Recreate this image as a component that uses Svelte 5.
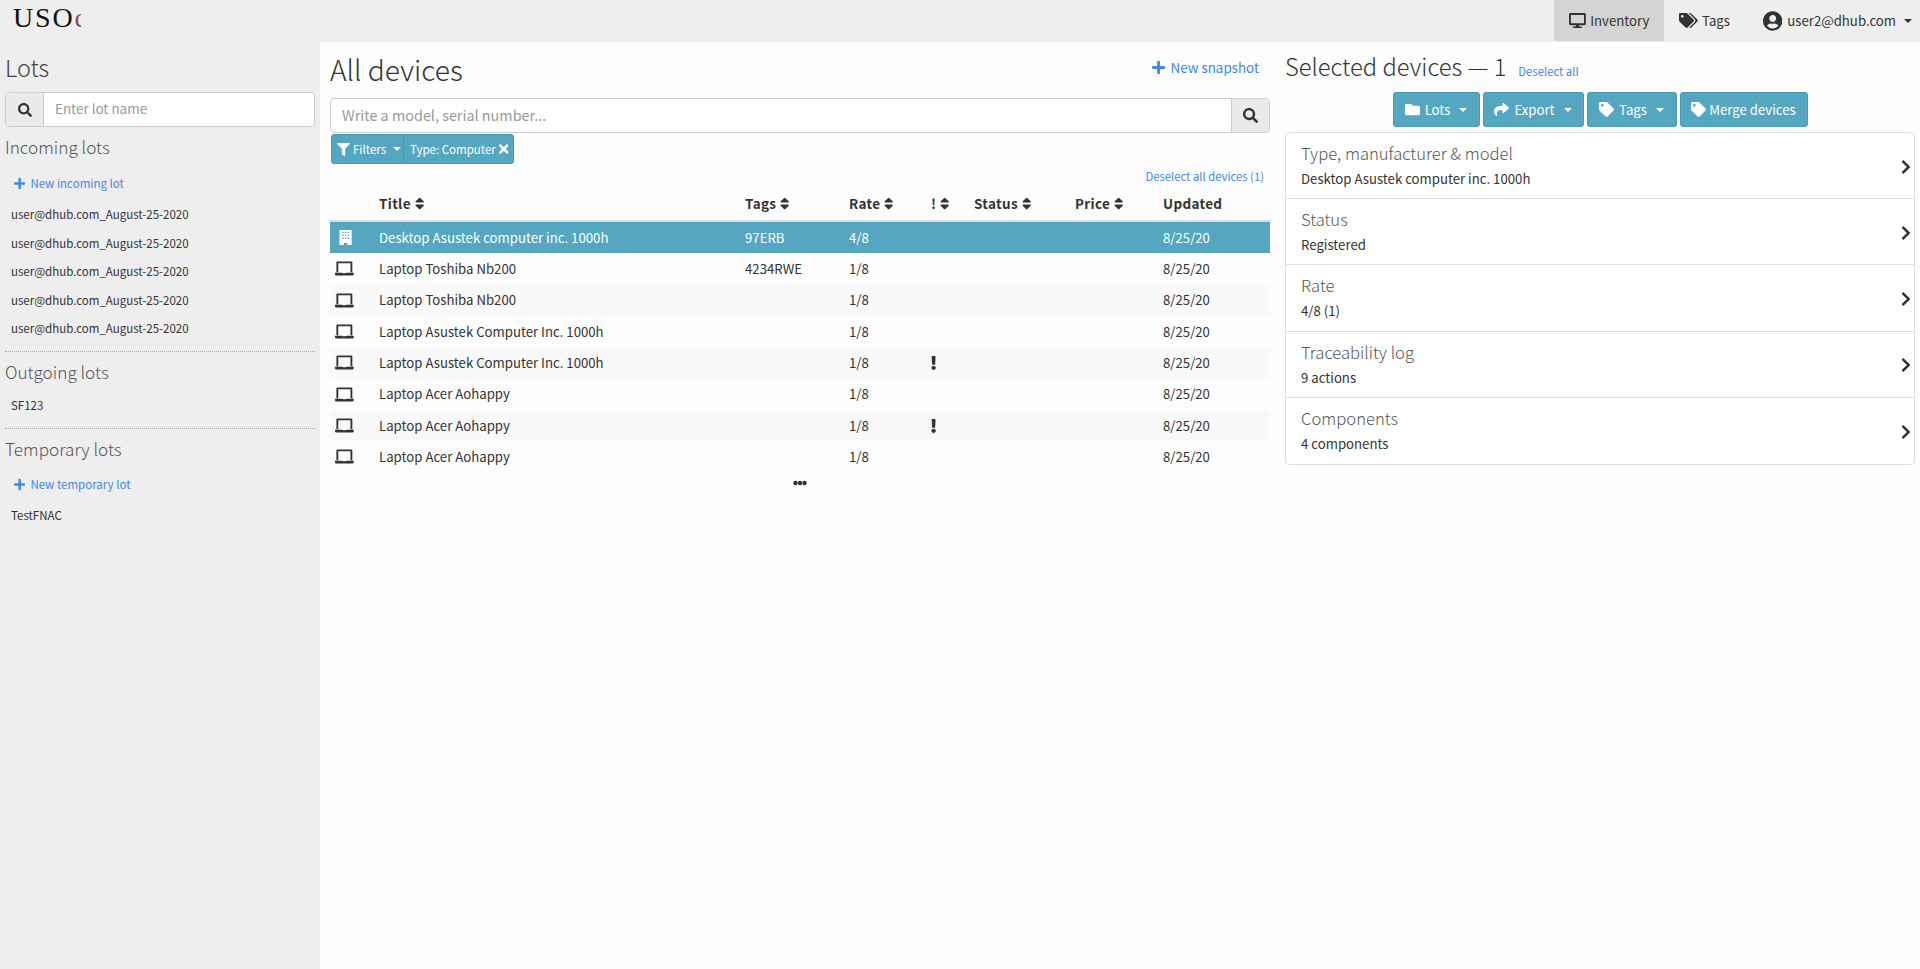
<script>
  const P = {
    search: [512, 'M505 442.7L405.3 343c-4.5-4.5-10.6-7-17-7H372c27.6-35.3 44-79.7 44-128C416 93.1 322.9 0 208 0S0 93.1 0 208s93.1 208 208 208c48.3 0 92.7-16.4 128-44v16.3c0 6.4 2.5 12.5 7 17l99.7 99.7c9.4 9.4 24.6 9.4 33.9 0l28.3-28.3c9.4-9.4 9.4-24.6.1-34zM208 336c-70.7 0-128-57.2-128-128 0-70.7 57.2-128 128-128 70.7 0 128 57.2 128 128 0 70.7-57.2 128-128 128z'],
    plus: [448, 'M416 208H272V64c0-17.67-14.33-32-32-32h-32c-17.67 0-32 14.33-32 32v144H32c-17.67 0-32 14.33-32 32v32c0 17.67 14.33 32 32 32h144v144c0 17.67 14.33 32 32 32h32c17.67 0 32-14.33 32-32V304h144c17.67 0 32-14.33 32-32v-32c0-17.67-14.33-32-32-32z'],
    tags: [640, 'M497.941 225.941L286.059 14.059A48 48 0 0 0 252.118 0H48C21.49 0 0 21.49 0 48v204.118a48 48 0 0 0 14.059 33.941l211.882 211.882c18.744 18.745 49.136 18.746 67.882 0l204.118-204.118c18.745-18.745 18.745-49.137 0-67.882zM112 160c-26.51 0-48-21.49-48-48s21.49-48 48-48 48 21.49 48 48-21.49 48-48 48zm513.941 133.823L421.823 497.941c-18.745 18.745-49.137 18.745-67.882 0l-.36-.36L527.64 323.522c16.999-16.999 26.36-39.6 26.36-63.64s-9.362-46.641-26.36-63.64L331.397 0h48.721a48 48 0 0 1 33.941 14.059l211.882 211.882c18.745 18.745 18.745 49.137 0 67.882z'],
    tag: [512, 'M0 252.118V48C0 21.49 21.49 0 48 0h204.118a48 48 0 0 1 33.941 14.059l211.882 211.882c18.745 18.745 18.745 49.137 0 67.882L293.823 497.941c-18.745 18.745-49.137 18.745-67.882 0L14.059 286.059A48 48 0 0 1 0 252.118zM112 64c-26.51 0-48 21.49-48 48s21.49 48 48 48 48-21.49 48-48-21.49-48-48-48z'],
    user: [496, 'M248 8C111 8 0 119 0 256s111 248 248 248 248-111 248-248S385 8 248 8zm0 96c48.6 0 88 39.4 88 88s-39.4 88-88 88-88-39.4-88-88 39.4-88 88-88zm0 344c-58.7 0-111.3-26.6-146.5-68.2 18.8-35.4 55.6-59.8 98.5-59.8 2.4 0 4.8.4 7.1 1.1 13 4.2 26.6 6.9 40.9 6.9 14.3 0 28-2.7 40.9-6.9 2.3-.7 4.7-1.1 7.1-1.1 42.9 0 79.7 24.4 98.5 59.8C359.3 421.4 306.7 448 248 448z'],
    desktop: [576, 'M528 0H48C21.5 0 0 21.5 0 48v320c0 26.5 21.5 48 48 48h192l-16 48h-72c-13.3 0-24 10.7-24 24s10.7 24 24 24h272c13.3 0 24-10.7 24-24s-10.7-24-24-24h-72l-16-48h192c26.5 0 48-21.5 48-48V48c0-26.5-21.5-48-48-48zm-16 352H64V64h448v288z'],
    filter: [512, 'M487.976 0H24.028C2.71 0-8.047 25.866 7.058 40.971L192 225.941V432c0 7.831 3.821 15.17 10.237 19.662l80 55.98C298.02 518.69 320 507.493 320 487.98V225.941l184.947-184.97C520.021 25.896 509.338 0 487.976 0z'],
    folder: [512, 'M464 128H272l-64-64H48C21.49 64 0 85.49 0 112v288c0 26.51 21.49 48 48 48h416c26.51 0 48-21.49 48-48V176c0-26.51-21.49-48-48-48z'],
    share: [512, 'M503.691 189.836L327.687 37.851C312.281 24.546 288 35.347 288 56.015v80.053C127.371 137.907 0 170.1 0 322.326c0 61.441 39.581 122.309 83.333 154.132 13.653 9.931 33.111-2.533 28.077-18.631C66.066 312.814 132.917 274.316 288 272.085V360c0 20.7 24.3 31.453 39.687 18.164l176.004-152c11.071-9.562 11.086-26.753 0-36.328z'],
    times: [352, 'M242.72 256l100.07-100.07c12.28-12.28 12.28-32.19 0-44.48l-22.24-22.24c-12.28-12.28-32.19-12.28-44.48 0L176 189.28 75.93 89.21c-12.28-12.28-32.19-12.28-44.48 0L9.21 111.45c-12.28 12.28-12.28 32.19 0 44.48L109.28 256 9.21 356.07c-12.28 12.28-12.28 32.19 0 44.48l22.24 22.24c12.28 12.28 32.2 12.28 44.48 0L176 322.72l100.07 100.07c12.28 12.28 32.2 12.28 44.48 0l22.24-22.24c12.28-12.28 12.28-32.19 0-44.48L242.72 256z'],
    sort: [320, 'M41 288h238c21.4 0 32.1 25.9 17 41L177 448c-9.4 9.4-24.6 9.4-33.9 0L24 329c-15.1-15.1-4.4-41 17-41zm255-105L177 64c-9.4-9.4-24.6-9.4-33.9 0L24 183c-15.1 15.1-4.4 41 17 41h238c21.4 0 32.1-25.9 17-41z'],
    chevron: [320, 'M285.476 272.971L91.132 467.314c-9.373 9.373-24.569 9.373-33.941 0l-22.667-22.667c-9.357-9.357-9.375-24.522-.04-33.901L188.505 256 34.484 101.255c-9.335-9.379-9.317-24.544.04-33.901l22.667-22.667c9.373-9.373 24.569-9.373 33.941 0L285.475 239.03c9.373 9.372 9.373 24.568.001 33.941z'],
    bang: [192, 'M176 432c0 44.112-35.888 80-80 80s-80-35.888-80-80 35.888-80 80-80 80 35.888 80 80zM25.26 25.199l13.6 272C39.499 309.972 50.041 320 62.83 320h66.34c12.789 0 23.331-10.028 23.97-22.801l13.6-272C167.425 11.49 156.496 0 142.77 0H49.23C35.504 0 24.575 11.49 25.26 25.199z'],
    laptop: [640, 'M80 16h480a32 32 0 0 1 32 32v336h-64V80H112v304H48V48a32 32 0 0 1 32-32zM0 400h250l16 20h108l16-20h250v48a48 48 0 0 1-48 48H48a48 48 0 0 1-48-48z'],
    building: [448, 'M16 0h416v512H288v-72H160v72H16V0zm92 64v48h48V64h-48zm92 0v48h48V64h-48zm92 0v48h48V64h-48zm-184 96v48h48v-48h-48zm92 0v48h48v-48h-48zm92 0v48h48v-48h-48zm-184 96v48h48v-48h-48zm92 0v48h48v-48h-48zm92 0v48h48v-48h-48z'],
    dots: [512, 'M170 256a80 80 0 1 1-160 0 80 80 0 0 1 160 0zm86-80a80 80 0 1 0 0 160 80 80 0 0 0 0-160zm166 0a80 80 0 1 0 0 160 80 80 0 0 0 0-160z']
  };
  const incoming = Array(5).fill('user@dhub.com_August-25-2020');
  const columns = [
    { name: 'Title', cls: 'title', sort: true },
    { name: 'Tags', cls: 'tags', sort: true },
    { name: 'Rate', cls: 'rate', sort: true },
    { name: '!', cls: 'bang', sort: true },
    { name: 'Status', cls: 'status', sort: true },
    { name: 'Price', cls: 'price', sort: true },
    { name: 'Updated', cls: 'updated', sort: false }
  ];
  const rows = [
    { t: 'Desktop Asustek computer inc. 1000h', tag: '97ERB', r: '4/8', sel: true },
    { t: 'Laptop Toshiba Nb200', tag: '4234RWE', r: '1/8' },
    { t: 'Laptop Toshiba Nb200', tag: '', r: '1/8' },
    { t: 'Laptop Asustek Computer Inc. 1000h', tag: '', r: '1/8' },
    { t: 'Laptop Asustek Computer Inc. 1000h', tag: '', r: '1/8', warn: true },
    { t: 'Laptop Acer Aohappy', tag: '', r: '1/8' },
    { t: 'Laptop Acer Aohappy', tag: '', r: '1/8', warn: true },
    { t: 'Laptop Acer Aohappy', tag: '', r: '1/8' }
  ];
  const details = [
    ['Type, manufacturer & model', 'Desktop Asustek computer inc. 1000h'],
    ['Status', 'Registered'],
    ['Rate', '4/8 (1)'],
    ['Traceability log', '9 actions'],
    ['Components', '4 components']
  ];
</script>

{#snippet icon(name, h, cls = '')}
  <svg class="ic {cls}" height={h} width={(h * P[name][0]) / 512} viewBox="0 0 {P[name][0]} 512" aria-hidden="true"><path d={P[name][1]} /></svg>
{/snippet}

<div class="page">
  <header class="nav">
    <div class="logo"><span class="logo-text">USO<span class="logo-c">c</span></span></div>
    <nav class="menu">
      <a class="item active">{@render icon('desktop', 15)}<span>Inventory</span></a>
      <a class="item tagsitem">{@render icon('tags', 15)}<span>Tags</span></a>
      <a class="item useritem">{@render icon('user', 20)}<span>user2@dhub.com</span><i class="caret"></i></a>
    </nav>
  </header>

  <div class="body">
    <aside class="side">
      <h2 class="lots-h">Lots</h2>
      <div class="igroup side-search">
        <span class="addon start">{@render icon('search', 14)}</span>
        <input placeholder="Enter lot name" />
      </div>
      <h3 class="first">Incoming lots</h3>
      <a class="new">{@render icon('plus', 13)}<span>New incoming lot</span></a>
      <ul>
        {#each incoming as l}<li>{l}</li>{/each}
      </ul>
      <hr />
      <h3>Outgoing lots</h3>
      <ul class="single"><li>SF123</li></ul>
      <hr />
      <h3>Temporary lots</h3>
      <a class="new tmp">{@render icon('plus', 13)}<span>New temporary lot</span></a>
      <ul class="single"><li>TestFNAC</li></ul>
    </aside>

    <main class="center">
      <div class="center-head">
        <h1>All devices</h1>
        <a class="snapshot">{@render icon('plus', 15)}<span>New snapshot</span></a>
      </div>
      <div class="igroup main-search">
        <input placeholder="Write a model, serial number..." />
        <span class="addon end">{@render icon('search', 15)}</span>
      </div>
      <div class="filters">
        <span class="fbtn">{@render icon('filter', 13)}<span>Filters</span><i class="caret"></i></span>
        <span class="fbtn second"><span>Type: Computer</span>{@render icon('times', 14)}</span>
      </div>
      <div class="deselect"><a>Deselect all devices (1)</a></div>

      <div class="table">
        <div class="row head">
          <span class="cell icon"></span>
          {#each columns as c}
            <span class="cell {c.cls}">{c.name}{#if c.sort}{@render icon('sort', 15, 'sort')}{/if}</span>
          {/each}
        </div>
        {#each rows as r, i}
          <div class="row" class:sel={r.sel} class:alt={i % 2 === 0 && !r.sel}>
            <span class="cell icon">{@render icon(r.sel ? 'building' : 'laptop', 15)}</span>
            <span class="cell title">{r.t}</span>
            <span class="cell tags">{r.tag}</span>
            <span class="cell rate">{r.r}</span>
            <span class="cell bang">{#if r.warn}{@render icon('bang', 14)}{/if}</span>
            <span class="cell status"></span>
            <span class="cell price"></span>
            <span class="cell updated">8/25/20</span>
          </div>
        {/each}
      </div>
      <div class="more">{@render icon('dots', 14)}</div>
    </main>

    <section class="detail-col">
      <div class="detail-head">
        <h2>Selected devices — 1</h2>
        <a>Deselect all</a>
      </div>
      <div class="actions">
        <span class="btn w1">{@render icon('folder', 15)}<span>Lots</span><i class="caret"></i></span>
        <span class="btn w2">{@render icon('share', 15)}<span>Export</span><i class="caret"></i></span>
        <span class="btn w3">{@render icon('tag', 15)}<span>Tags</span><i class="caret"></i></span>
        <span class="btn w4">{@render icon('tag', 15)}<span>Merge devices</span></span>
      </div>
      <div class="panel">
        {#each details as d}
          <div class="detail">
            <div>
              <div class="dt">{d[0]}</div>
              <div class="dd">{d[1]}</div>
            </div>
            {@render icon('chevron', 16, 'chev')}
          </div>
        {/each}
      </div>
    </section>
  </div>
</div>

<style>
  :global(body) {
    margin: 0;
    background: #fdfdfd;
  }
  .page {
    font-family: "Noto Sans CJK SC", "Noto Sans", sans-serif;
    font-size: 13.2px;
    line-height: 20px;
    color: #333;
    min-height: 969px;
    display: flex;
    flex-direction: column;
  }
  .ic {
    fill: currentColor;
    flex: none;
    display: inline-block;
  }
  a { color: #3f88e6; }

  .nav {
    height: 42px;
    background: #eee;
    display: flex;
    justify-content: space-between;
  }
  .logo {
    width: 81px;
    overflow: hidden;
    padding-left: 13px;
    box-sizing: border-box;
    height: 42px;
  }
  .logo-text {
    font-family: "Liberation Serif", serif;
    font-size: 28px;
    line-height: 36px;
    letter-spacing: 1.8px;
    color: #111;
    white-space: nowrap;
    display: block;
  }
  .logo-c { color: #a23a6c; }
  .menu {
    display: flex;
    padding-right: 8px;
  }
  .item {
    display: flex;
    align-items: center;
    gap: 4px;
    color: #333;
    height: 41px;
  }
  .active {
    background: #d4d4d4;
    width: 110px;
    box-sizing: border-box;
    padding-left: 15px;
  }
  .tagsitem { margin-left: 15px; gap: 4px; }
  .useritem { margin-left: 33px; gap: 5px; }
  .useritem .caret { margin-left: 3px; }
  .caret {
    display: inline-block;
    width: 0;
    height: 0;
    border-top: 4px solid currentColor;
    border-left: 4px solid transparent;
    border-right: 4px solid transparent;
  }

  .body {
    flex: 1;
    display: flex;
  }
  .side {
    width: 320px;
    background: #eee;
    padding: 0 5px;
    box-sizing: border-box;
    min-height: 927px;
    flex: none;
  }
  h1, h2, h3 {
    font-family: "Noto Sans CJK SC Light", "Noto Sans CJK SC", sans-serif;
    font-weight: 300;
    margin: 0;
    color: #333;
  }
  .lots-h {
    font-size: 23.5px;
    line-height: 34px;
    margin-top: 8px;
    color: #444;
  }
  .igroup {
    display: flex;
    height: 35px;
    box-sizing: border-box;
    border: 1px solid #ccc;
    border-radius: 4px;
    background: #fff;
    overflow: hidden;
  }
  .side-search { margin-top: 8px; }
  .addon {
    background: #eaeaea;
    width: 38px;
    flex: none;
    display: flex;
    align-items: center;
    justify-content: center;
    box-sizing: border-box;
  }
  .addon.start { border-right: 1px solid #ccc; }
  .addon.end { border-left: 1px solid #ccc; }
  input {
    flex: 1;
    min-width: 0;
    border: 0;
    outline: 0;
    background: transparent;
    font: inherit;
    padding: 0 11px 2px;
    color: #333;
  }
  .side-search input { font-size: 13.45px; padding-bottom: 4px; }
  .main-search input { font-size: 14.4px; }
  input::placeholder { color: #999; opacity: 1; }
  h3 {
    font-size: 17.2px;
    line-height: 26px;
    color: #555;
  }
  h3.first { margin-top: 7px; }
  .new {
    display: flex;
    align-items: center;
    gap: 5px;
    font-size: 11.5px;
    padding-left: 9px;
    margin-top: 13px;
    height: 20px;
  }
  .new.tmp { margin-top: 12px; }
  ul {
    list-style: none;
    margin: 7px 0 0;
    padding: 0 0 0 6px;
    font-size: 11.5px;
  }
  li { height: 28.5px; line-height: 28.5px; white-space: nowrap; }
  ul.single { margin-top: 6.6px; height: 29px; }
  hr {
    border: 0;
    border-top: 1px dotted #aaa;
    margin: 8px 0 7px;
  }

  .center {
    width: 940px;
    margin-left: 10px;
    flex: none;
  }
  .center-head {
    display: flex;
    justify-content: space-between;
    align-items: center;
    height: 56px;
  }
  h1 { font-size: 28.2px; line-height: 40px; margin-top: -3px; }
  .snapshot {
    display: flex;
    align-items: center;
    gap: 5px;
    margin-right: 11px;
    margin-top: -6px;
    font-size: 13.4px;
  }
  .filters {
    display: flex;
    margin: 1px 0 0 1px;
    height: 30px;
    font-size: 11.5px;
  }
  .fbtn {
    background: #55a6c0;
    border: 1px solid #4a97b0;
    color: #fff;
    display: inline-flex;
    align-items: center;
    gap: 3px;
    padding: 0 5px;
    box-sizing: border-box;
    border-radius: 3px 0 0 3px;
    width: 73px;
    white-space: nowrap;
  }
  .fbtn .caret { margin-left: 4px; }
  .fbtn.second {
    border-left: 1px solid #4a97b0;
    border-radius: 0 3px 3px 0;
    width: 111px;
    margin-left: -1px;
    padding-left: 6px;
  }
  .deselect {
    text-align: right;
    font-size: 11.3px;
    padding-right: 6px;
    margin-top: 2px;
    height: 20px;
  }
  .table { width: 940px; }
  .row {
    display: flex;
    height: 31.33px;
    align-items: center;
    white-space: nowrap;
  }
  .row.head {
    height: 36px;
    font-size: 13.5px;
    font-weight: 700;
    border-bottom: 2px solid #ddd;
    box-sizing: border-box;
    letter-spacing: .3px;
  }
  .alt { background: #f9f9f9; }
  .sel { background: #55a6c0; color: #fff; }
  .sel .cell.icon { padding-left: 9px; }
  .cell { display: block; flex: none; }
  .cell.icon { width: 49px; padding-left: 5px; box-sizing: border-box; display: flex; }
  .cell.title { width: 366px; }
  .cell.tags { width: 104px; }
  .cell.rate { width: 82px; }
  .cell.bang { width: 43px; }
  .cell.status { width: 101px; }
  .cell.price { width: 88px; }
  .head .cell { display: flex; align-items: center; gap: 4px; }
  .row:not(.head) .cell.bang { display: flex; }
  .more {
    display: flex;
    justify-content: center;
    margin-top: 3px;
    width: 940px;
  }

  .detail-col {
    width: 630px;
    margin-left: 15px;
    flex: none;
  }
  .detail-head {
    display: flex;
    align-items: baseline;
    gap: 12px;
    height: 50px;
    padding-top: 7px;
    box-sizing: border-box;
    font-size: 11.3px;
  }
  .detail-head h2 { font-size: 23.7px; line-height: 34px; }
  .actions {
    display: flex;
    justify-content: center;
    gap: 3px;
    height: 35px;
  }
  .btn {
    background: #55a6c0;
    border: 1px solid #4a97b0;
    border-radius: 3px;
    color: #fff;
    display: inline-flex;
    align-items: center;
    justify-content: center;
    gap: 5px;
    box-sizing: border-box;
    height: 35px;
  }
  .btn .caret { margin-left: 4px; }
  .w1 { width: 87px; }
  .w2 { width: 101px; }
  .w3 { width: 90px; }
  .w4 { width: 128px; gap: 3px; }
  .panel {
    margin-top: 5px;
    border: 1px solid #ddd;
    border-radius: 4px;
    background: #fff;
    box-sizing: border-box;
  }
  .detail {
    height: 66.2px;
    box-sizing: border-box;
    padding: 8px 3px 0 15px;
    display: flex;
    justify-content: space-between;
    align-items: center;
    border-bottom: 1px solid #ddd;
  }
  .detail:last-child { border-bottom: 0; }
  .detail > div { align-self: flex-start; }
  .chev { margin-bottom: 6px; }
  .dt { font-size: 16.6px; font-weight: 300; font-family: "Noto Sans CJK SC Light", "Noto Sans CJK SC", sans-serif; line-height: 24px; color: #555; }
  .dd { margin-top: 4px; line-height: 20px; }
</style>
